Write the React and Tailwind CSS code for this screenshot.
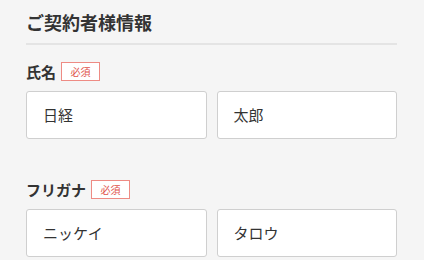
import React from 'react';

const font = { fontFamily: '"Noto Sans CJK JP", "Noto Sans", sans-serif' };

const Required = () => (
  <span className="ml-[5px] inline-flex h-[19px] w-[39px] items-center justify-center border border-[#ee8b84] bg-white text-[10px] leading-none text-[#e0524a]">
    必須
  </span>
);

const Field = ({ label, values }) => (
  <div>
    <div className="flex h-[19px] items-center">
      <span className="text-[15px] font-bold leading-none text-[#333]">{label}</span>
      <Required />
    </div>
    <div className="mt-[10px] grid grid-cols-2 gap-[10px]">
      {values.map((v) => (
        <div
          key={v}
          className="flex h-[48px] items-center rounded-[3px] border border-[#cfcfcf] bg-white pl-[16px] text-[15px] text-[#333]"
        >
          {v}
        </div>
      ))}
    </div>
  </div>
);

export default function App() {
  return (
    <div className="h-[260px] w-[424px] overflow-hidden bg-[#f5f5f5]" style={font}>
      <div className="ml-[26px] w-[371px]">
        <h2 className="border-b-2 border-[#e4e4e4] pt-[9px] pb-[8px] text-[18px] font-bold leading-[26px] text-[#333]">
          ご契約者様情報
        </h2>
        <div className="mt-[17px]">
          <Field label="氏名" values={['日経', '太郎']} />
        </div>
        <div className="mt-[41px]">
          <Field label="フリガナ" values={['ニッケイ', 'タロウ']} />
        </div>
      </div>
    </div>
  );
}
